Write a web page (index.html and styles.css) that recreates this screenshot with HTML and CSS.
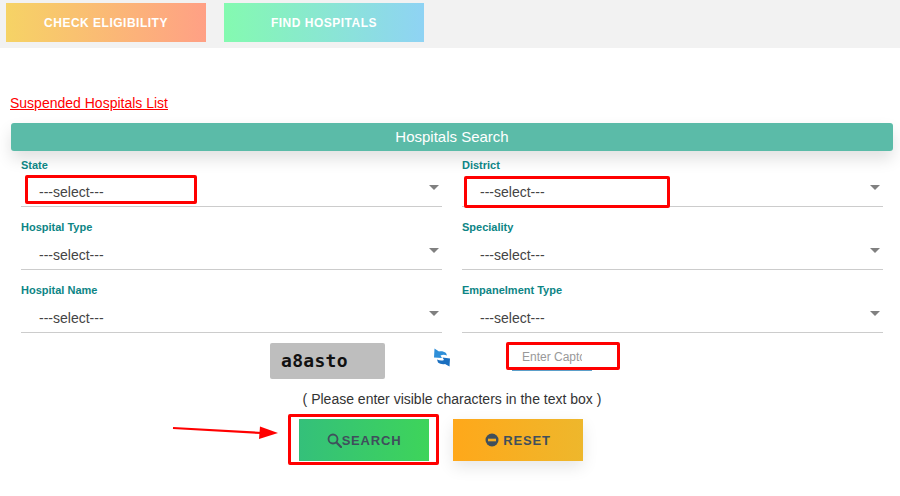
FILE: index.html
```html
<!DOCTYPE html>
<html lang="en">
<head>
<meta charset="utf-8">
<title>Hospitals Search</title>
<link rel="stylesheet" href="styles.css">
</head>
<body>
<div class="page">
  <nav class="topbar">
    <a class="tab tab-check">CHECK ELIGIBILITY</a>
    <a class="tab tab-find">FIND HOSPITALS</a>
  </nav>
  <a class="suspended">Suspended Hospitals List</a>
  <h2 class="panel-title">Hospitals Search</h2>
  <form class="fields">
    <div class="field"><label>State</label><div class="select"><span>---select---</span><i class="caret"></i></div></div>
    <div class="field"><label>District</label><div class="select"><span>---select---</span><i class="caret"></i></div></div>
    <div class="field"><label>Hospital Type</label><div class="select"><span>---select---</span><i class="caret"></i></div></div>
    <div class="field"><label>Speciality</label><div class="select"><span>---select---</span><i class="caret"></i></div></div>
    <div class="field"><label>Hospital Name</label><div class="select"><span>---select---</span><i class="caret"></i></div></div>
    <div class="field"><label>Empanelment Type</label><div class="select"><span>---select---</span><i class="caret"></i></div></div>
  </form>
  <div class="captcha-row">
    <div class="captcha-img">a8asto</div>
    <svg class="refresh" width="20" height="22" viewBox="0 0 20 22" aria-hidden="true">
      <path fill="#2f8fd8" d="M2.500 1.500L7 4.500c2.500-.5 5 0 7 1.500l1 2.500C12.500 7.500 10.500 7.500 8.500 8.500L10 11 2 10.500z"/>
      <path fill="#1a6fc0" d="M17.500 19.500L13 17c-2.500.5-5 0-7-1.500l-1-3c2.500 1.200 5 1.500 7 .5l-1.500-2.500L18 11.500z"/>
    </svg>
    <input class="captcha-input" type="text" placeholder="Enter Captcha">
  </div>
  <p class="hint">( Please enter visible characters in the text box )</p>
  <div class="actions">
    <button class="btn btn-search" type="button">
      <svg width="15" height="15" viewBox="0 0 15 15" aria-hidden="true"><circle cx="6" cy="6" r="4.500" fill="none" stroke="#3f4f5c" stroke-width="1.800"/><path d="M9.500 9.500L14 14" stroke="#3f4f5c" stroke-width="2.200" stroke-linecap="round"/></svg>SEARCH
    </button>
    <button class="btn btn-reset" type="button">
      <svg width="14" height="14" viewBox="0 0 14 14" aria-hidden="true"><circle cx="7" cy="7" r="6.500" fill="#3f4f5c"/><rect x="3" y="5.700" width="8" height="2.600" fill="#f5ab1f"/></svg>RESET
    </button>
  </div>
  <div class="mark mark-state"></div>
  <div class="mark mark-district"></div>
  <div class="mark mark-captcha"></div>
  <div class="mark mark-search"></div>
  <svg class="arrow" width="110" height="16" viewBox="0 0 110 16" aria-hidden="true">
    <path d="M1 3L90 8" stroke="#f00" stroke-width="2.200" fill="none"/>
    <path d="M88 1.500L106 8 87 14z" fill="#f00"/>
  </svg>
</div>
</body>
</html>
```
FILE: styles.css
```css
* { box-sizing: border-box; }
html, body { margin: 0; padding: 0; background: #fff; }
body { font-family: "Liberation Sans", Arial, sans-serif; color: #333; overflow: hidden; }
.page { position: relative; width: 900px; height: 496px; overflow: hidden; }

.topbar { display: flex; gap: 18px; height: 48px; padding: 3px 6px 0; background: #f2f2f2; }
.tab { display: flex; align-items: center; justify-content: center; width: 200px; height: 39px; color: #fff; font-size: 12px; font-weight: 700; letter-spacing: .5px; }
.tab-check { background: linear-gradient(90deg, #f6d365, #ffa085); }
.tab-find { background: linear-gradient(90deg, #84fab0, #8fd3f4); }

.suspended { display: block; margin: 47px 0 0 10px; height: 16px; line-height: 16px; font-size: 14px; color: #f00; text-decoration: underline; }

.panel-title { margin: 12px 7px 0 11px; height: 28px; line-height: 28px; border-radius: 3px; background: #5bbba8; color: #fff; font-size: 15px; font-weight: 400; text-align: center; box-shadow: 0 8px 16px rgba(0,0,0,.12); }

.fields { display: grid; grid-template-columns: 421px 421px; column-gap: 20px; row-gap: 15px; margin: 8px 0 0 21px; }
.field { height: 48px; }
.field label { display: block; height: 12px; line-height: 12px; font-size: 11px; font-weight: 700; color: #0d8585; }
.field:nth-child(n+3) label { margin: -1px 0 1px; }
.select { position: relative; height: 36px; padding: 12px 0 0 18px; line-height: 18px; font-size: 14px; color: #444; border-bottom: 1px solid #ccc; }
.caret { position: absolute; right: 3px; top: 14px; width: 0; height: 0; border-left: 5px solid transparent; border-right: 5px solid transparent; border-top: 5px solid #808080; }

.captcha-row { display: flex; margin: 10px 0 0 270px; height: 36px; }
.captcha-img { width: 115px; height: 36px; padding: 8px 0 0 11px; border-radius: 2px; background: #bebebe; color: #111; font-family: "DejaVu Sans Mono", "Liberation Mono", monospace; font-size: 18px; line-height: 20px; font-weight: 700; letter-spacing: .3px; }
.refresh { margin: 4px 0 0 47px; }
.captcha-input { width: 80px; height: 28px; margin: 0 0 0 60px; padding: 0 10px 0 10px; align-self: flex-start; border: 0; border-bottom: 1px solid #5b9fc9; outline: 0; background: transparent; font: 12px "Liberation Sans", Arial, sans-serif; }
.captcha-input::placeholder { color: #999; opacity: 1; }

.hint { margin: 12px 0 0; padding-left: 4px; height: 16px; line-height: 16px; font-size: 14px; color: #333; text-align: center; }

.actions { display: flex; gap: 24px; margin: 12px 0 0 299px; }
.btn { display: flex; align-items: center; justify-content: center; width: 130px; height: 42px; padding: 0; border: 0; color: #3f4f5c; font: 700 13px "Liberation Sans", Arial, sans-serif; letter-spacing: .8px; }
.btn-search { background: linear-gradient(90deg, #34c07a, #3ed45a); }
.btn-reset { gap: 4px; background: linear-gradient(90deg, #ffa81a, #eeb72c); box-shadow: 0 6px 16px rgba(0,0,0,.1); }

.mark { position: absolute; border: 3px solid #f00; border-radius: 2px; }
.mark-state { left: 25px; top: 175px; width: 172px; height: 29px; }
.mark-district { left: 464px; top: 176px; width: 206px; height: 32px; }
.mark-captcha { left: 506px; top: 342px; width: 114px; height: 28px; }
.mark-search { left: 288px; top: 414px; width: 151px; height: 51px; }
.arrow { position: absolute; left: 172px; top: 425px; }
```
